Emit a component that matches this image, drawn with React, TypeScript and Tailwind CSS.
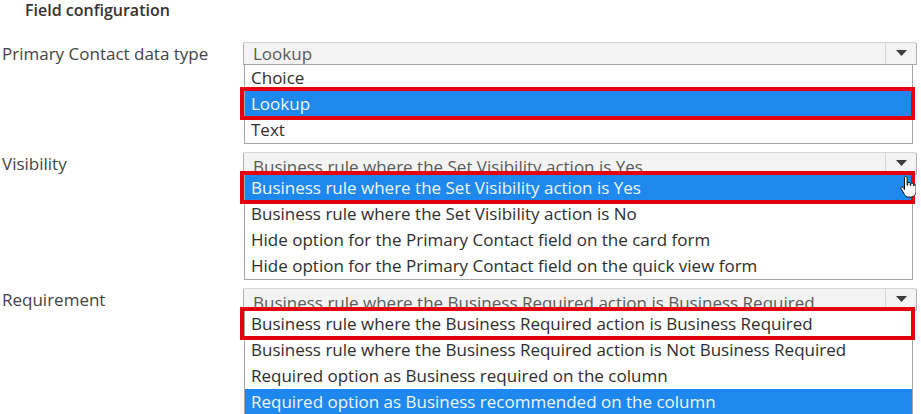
import React from "react";

type Item = { text: string; selected?: boolean; outlined?: boolean; cursor?: boolean };

function HandCursor() {
  return (
    <svg
      className="absolute right-[-4px] top-[1px] z-20"
      width="17"
      height="22"
      viewBox="0 0 17 22"
    >
      <path
        d="M5.5 1.8c0-.8.6-1.3 1.3-1.3s1.3.5 1.3 1.3v7.4h.6V7.6c0-.8.6-1.3 1.3-1.3s1.3.5 1.3 1.3v1.8h.5V8.3c0-.8.6-1.3 1.3-1.3s1.3.5 1.3 1.3v1.5h.3c0-.8.6-1.2 1.2-1.2s1.2.5 1.2 1.3v5.2c0 3.4-2.2 6-5.4 6H9.6c-2 0-3.2-1-4.2-2.8L2 12.6c-.4-.7-.1-1.4.6-1.6.6-.2 1.2.1 1.6.6l1.3 1.9z"
        fill="#ffffff"
        stroke="#111111"
        strokeWidth="1"
        strokeLinejoin="round"
      />
    </svg>
  );
}

function Select({ value, clipped }: { value: string; clipped?: boolean }) {
  return (
    <div className="relative flex h-[23px] overflow-hidden rounded-tr-[3px] rounded-tl-[2px] border border-[#b2b2b2] border-t-[#d4d4d4] bg-[#f3f3f3]">
      <div
        className={
          clipped
            ? "flex-1 whitespace-nowrap pl-[9px] pt-[3px] text-[17px] leading-[21px] text-[#5a5a5a]"
            : "flex-1 whitespace-nowrap pl-[9px] pt-[0px] text-[17px] leading-[21px] text-[#5a5a5a]"
        }
      >
        {value}
      </div>
      <div className="flex w-[31px] justify-center border-l border-[#d4d4d4] pt-[7px]">
        <svg width="11" height="6" viewBox="0 0 11 6">
          <path d="M0 0h11L5.5 6z" fill="#3c3c3c" />
        </svg>
      </div>
    </div>
  );
}

function List({ items }: { items: Item[] }) {
  return (
    <div className="relative -mt-px ml-[1px] mr-[4px] border border-[#a6a6a6] bg-white">
      {items.map((it, i) => (
        <div
          key={i}
          className={
            it.selected
              ? "relative h-[26px] whitespace-nowrap bg-[#1f88ee] pl-[6px] text-[17px] leading-[26px] text-[#eef8ff]"
              : "relative h-[26px] whitespace-nowrap pl-[6px] text-[17px] leading-[26px] text-[#2e2e2e]"
          }
        >
          {it.text}
          {it.outlined && (
            <span className="pointer-events-none absolute -bottom-[3px] -left-[5px] -right-[3px] -top-[4px] z-10 border-[4px] border-[#e4000f]" />
          )}
          {it.cursor && <HandCursor />}
        </div>
      ))}
    </div>
  );
}

function Section({
  label,
  value,
  clipped,
  items,
}: {
  label: string;
  value: string;
  clipped?: boolean;
  items: Item[];
}) {
  return (
    <div className="flex">
      <div className="h-[23px] w-[243px] shrink-0 whitespace-nowrap pl-[2px] text-[17px] leading-[23px] text-[#444444]">
        {label}
      </div>
      <div className="mr-[4px] min-w-0 flex-1">
        <Select value={value} clipped={clipped} />
        <List items={items} />
      </div>
    </div>
  );
}

export default function App() {
  return (
    <div className="h-[414px] w-[921px] overflow-hidden bg-white font-['Open_Sans',sans-serif]">
      <div className="pl-[25px] text-[16px] font-semibold leading-[20px] text-[#333333]">
        Field configuration
      </div>
      <div className="mt-[22px] flex flex-col gap-[8px]">
        <Section
          label="Primary Contact data type"
          value="Lookup"
          items={[
            { text: "Choice" },
            { text: "Lookup", selected: true, outlined: true },
            { text: "Text" },
          ]}
        />
        <Section
          label="Visibility"
          value="Business rule where the Set Visibility action is Yes"
          clipped
          items={[
            {
              text: "Business rule where the Set Visibility action is Yes",
              selected: true,
              outlined: true,
              cursor: true,
            },
            { text: "Business rule where the Set Visibility action is No" },
            { text: "Hide option for the Primary Contact field on the card form" },
            { text: "Hide option for the Primary Contact field on the quick view form" },
          ]}
        />
        <Section
          label="Requirement"
          value="Business rule where the Business Required action is Business Required"
          clipped
          items={[
            {
              text: "Business rule where the Business Required action is Business Required",
              outlined: true,
            },
            {
              text: "Business rule where the Business Required action is Not Business Required",
            },
            { text: "Required option as Business required on the column" },
            { text: "Required option as Business recommended on the column", selected: true },
          ]}
        />
      </div>
    </div>
  );
}
